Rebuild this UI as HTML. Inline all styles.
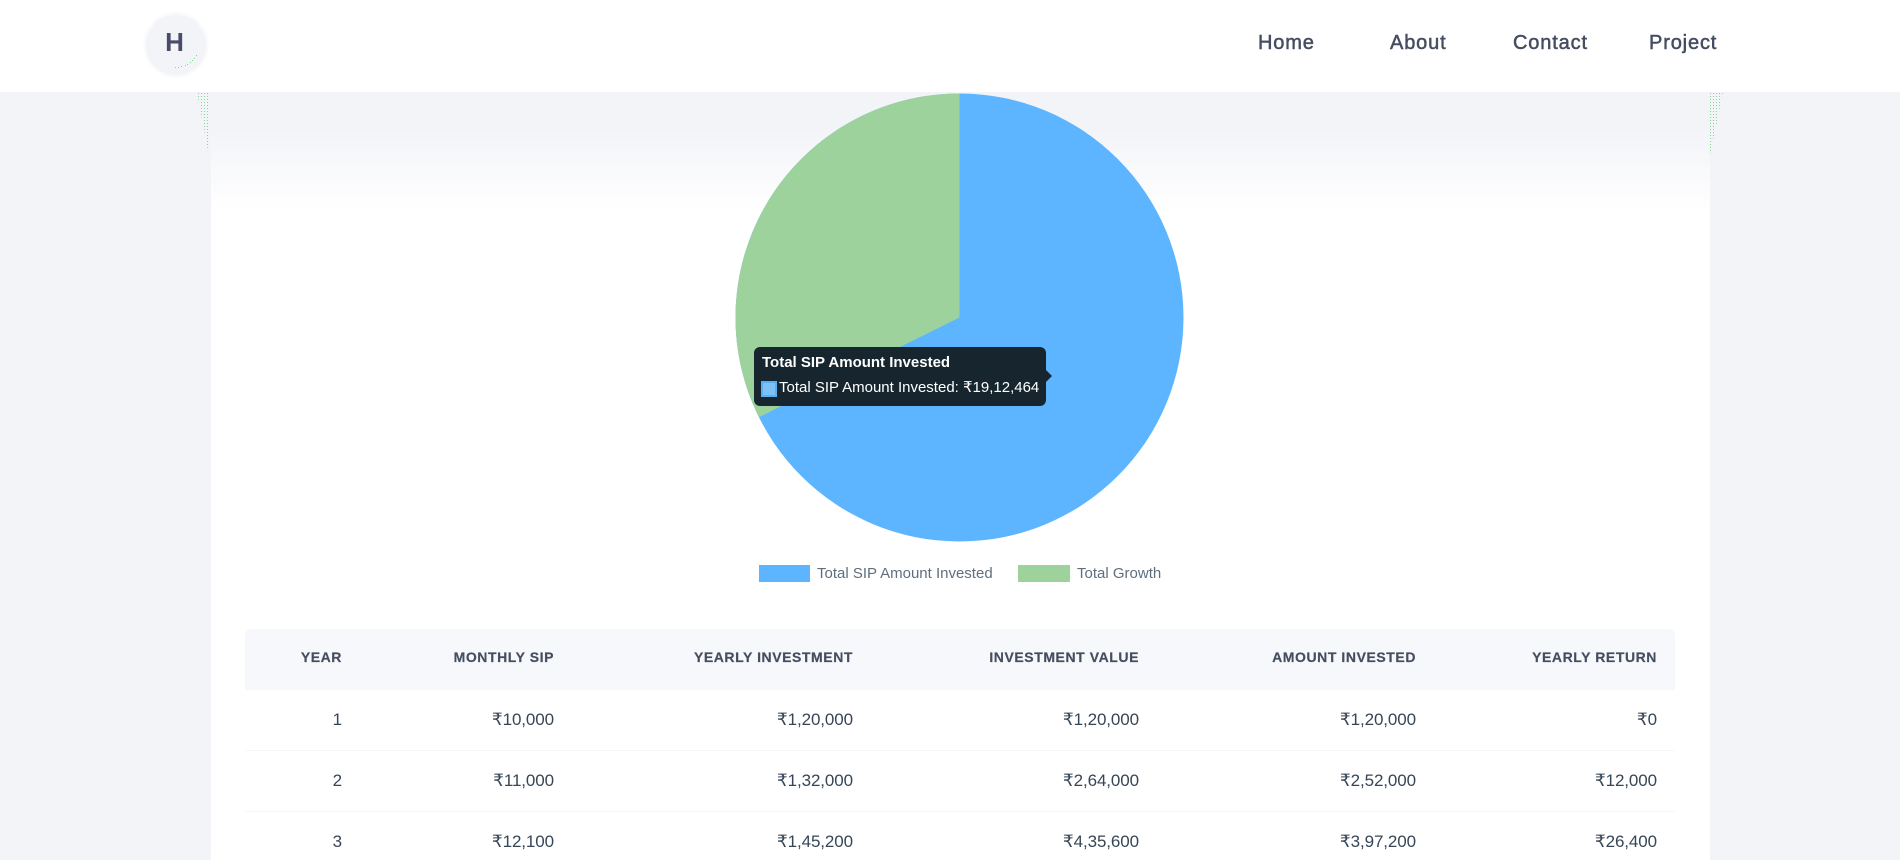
<!DOCTYPE html>
<html lang="en">
<head>
<meta charset="utf-8">
<title>SIP Calculator</title>
<style>
html,body{margin:0;padding:0}
body{width:1900px;height:860px;overflow:hidden;position:relative;background:#f3f4f8;font-family:"Liberation Sans",Arial,sans-serif}
.abs{position:absolute}
#panel{left:211px;top:128px;width:1499px;height:732px;background:linear-gradient(#f3f4f8 0,#ffffff 85px)}
#nav{left:0;top:0;width:1900px;height:92px;background:#fff}
#logo{left:146px;top:15px;width:60px;height:60px;border-radius:50%;background:#f3f4f8;box-shadow:0 0 3px 2px #f7f8fa}
#h{left:145px;top:12px;width:59px;line-height:60px;text-align:center;font-size:26px;font-weight:bold;color:#4a4b68}
.n{top:32px;line-height:22px;font-size:20px;letter-spacing:.85px;color:#454d60;-webkit-text-stroke:.5px #454d60;white-space:nowrap}
#tip{left:754px;top:347px;width:292px;height:59px;border-radius:6px;background:#17262e}
#arrow{left:1046px;top:370px;width:0;height:0;border-top:6px solid transparent;border-bottom:6px solid transparent;border-left:6px solid #17262e}
#tt{left:762px;top:354px;line-height:18px;font-size:15px;font-weight:bold;color:#fff;white-space:nowrap}
#tb{left:779px;top:379px;line-height:18px;font-size:15px;color:#fff;white-space:nowrap}
#sw{left:761px;top:381px;width:12px;height:12px;border:2px solid #5ab0f5;background:#7cc2f6}
.lg{height:17px;top:565px}
.lt{top:565px;line-height:18px;font-size:15px;color:#5f6f7e;white-space:nowrap}
#th{left:245px;top:629px;width:1430px;height:61px;background:#f7f8fb;border-radius:6px 6px 0 0}
.line{left:245px;width:1430px;height:1px;background:#f4f5f7}
.c{line-height:20px;white-space:nowrap;text-align:right}
.h{top:647px;font-size:14px;font-weight:bold;letter-spacing:.57px;color:#454d60;-webkit-text-stroke:.2px #454d60}
.d{font-size:17px;color:#364656;letter-spacing:-.1px}
.c1{right:1558px}.c2{right:1346px}.c3{right:1047px}.c4{right:761px}.c5{right:484px}.c6{right:243px}
.r1{top:710px}.r2{top:771px}.r3{top:832px}
</style>
</head>
<body>
<div id="panel" class="abs"></div>
<svg class="abs" style="left:0;top:0" width="1900" height="860" viewBox="0 0 1900 860">
<defs>
<pattern id="dots" width="3" height="3" patternUnits="userSpaceOnUse"><rect width="1" height="1" fill="#86d694"/></pattern>
</defs>
<polygon points="197,93 210,93 210,162" fill="url(#dots)"/>
<polygon points="1710,93 1723,93 1710,156" fill="url(#dots)"/>
<circle cx="959.5" cy="317.5" r="224" fill="#5eb5ff"/>
<path d="M959.5 317.5 L758.9 417.2 A224 224 0 0 1 959.5 93.5 Z" fill="#9dd29d"/>
</svg>
<div id="nav" class="abs"></div>
<div id="logo" class="abs"></div>
<svg class="abs" style="left:146px;top:15px" width="60" height="60" viewBox="146 15 60 60" fill="#86d694">
<rect x="175" y="67" width="1" height="1"/><rect x="178" y="67" width="1" height="1"/><rect x="181" y="66" width="1" height="1"/><rect x="185" y="65" width="1" height="1"/><rect x="187" y="64" width="1" height="1"/><rect x="190" y="62" width="1" height="1"/><rect x="192" y="60" width="1" height="1"/><rect x="194" y="58" width="1" height="1"/><rect x="196" y="55" width="1" height="1"/>
</svg>
<div id="h" class="abs">H</div>
<div class="abs n" style="left:1258px">Home</div>
<div class="abs n" style="left:1390px">About</div>
<div class="abs n" style="left:1513px">Contact</div>
<div class="abs n" style="left:1649px">Project</div>

<div id="tip" class="abs"></div>
<div id="arrow" class="abs"></div>
<div id="tt" class="abs">Total SIP Amount Invested</div>
<div id="sw" class="abs"></div>
<div id="tb" class="abs">Total SIP Amount Invested: ₹19,12,464</div>

<div class="abs lg" style="left:759px;width:51px;background:#5eb5ff"></div>
<div class="abs lt" style="left:817px">Total SIP Amount Invested</div>
<div class="abs lg" style="left:1018px;width:52px;background:#9dd29d"></div>
<div class="abs lt" style="left:1077px">Total Growth</div>

<div id="th" class="abs"></div>
<div class="abs line" style="top:750px"></div>
<div class="abs line" style="top:811px"></div>

<div class="abs c h c1">YEAR</div>
<div class="abs c h c2">MONTHLY SIP</div>
<div class="abs c h c3">YEARLY INVESTMENT</div>
<div class="abs c h c4">INVESTMENT VALUE</div>
<div class="abs c h c5">AMOUNT INVESTED</div>
<div class="abs c h c6">YEARLY RETURN</div>

<div class="abs c d r1 c1">1</div>
<div class="abs c d r1 c2">₹10,000</div>
<div class="abs c d r1 c3">₹1,20,000</div>
<div class="abs c d r1 c4">₹1,20,000</div>
<div class="abs c d r1 c5">₹1,20,000</div>
<div class="abs c d r1 c6">₹0</div>

<div class="abs c d r2 c1">2</div>
<div class="abs c d r2 c2">₹11,000</div>
<div class="abs c d r2 c3">₹1,32,000</div>
<div class="abs c d r2 c4">₹2,64,000</div>
<div class="abs c d r2 c5">₹2,52,000</div>
<div class="abs c d r2 c6">₹12,000</div>

<div class="abs c d r3 c1">3</div>
<div class="abs c d r3 c2">₹12,100</div>
<div class="abs c d r3 c3">₹1,45,200</div>
<div class="abs c d r3 c4">₹4,35,600</div>
<div class="abs c d r3 c5">₹3,97,200</div>
<div class="abs c d r3 c6">₹26,400</div>
</body>
</html>
